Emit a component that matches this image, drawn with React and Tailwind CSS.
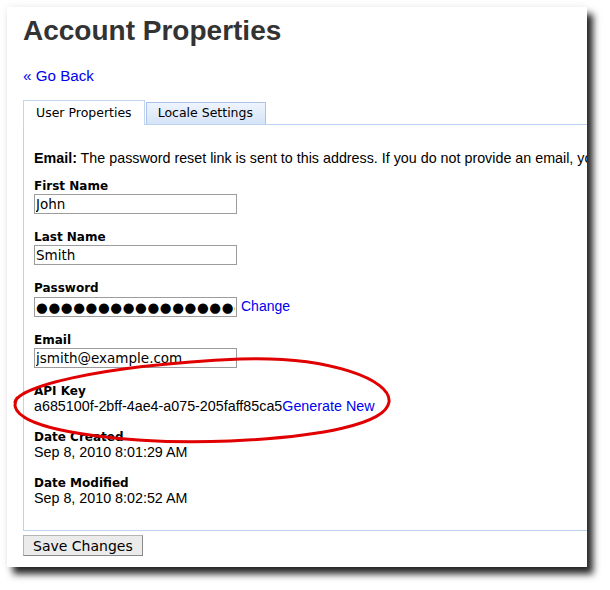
import React from "react";

const labelCls =
  "font-['DejaVu_Sans',sans-serif] font-bold text-[12px] leading-[16px] text-black";
const inputCls =
  "block w-[203px] h-[20px] border border-[#9c9c9c] bg-white px-[1px] font-['DejaVu_Sans',sans-serif] text-[13.5px] leading-[18px] text-black outline-none";
const valueCls =
  "font-['Liberation_Sans',Arial,sans-serif] text-[14.3px] leading-[15px] text-black";

function Field({ label, children }) {
  return (
    <div className="mb-[15px]">
      <div className={labelCls}>{label}</div>
      {children}
    </div>
  );
}

export default function App() {
  return (
    <div className="relative w-[610px] h-[590px] bg-white pl-[7px] pt-[7px]">
      {/* the page, shot with its drop shadow */}
      <div className="w-[580px] h-[560px] overflow-hidden bg-white pl-[16px] pt-[8px] shadow-[0_0_8px_rgba(0,0,0,0.07),6px_7px_7px_rgba(0,0,0,0.85)]">
        <h1 className="font-['Liberation_Sans',Arial,sans-serif] font-bold text-[28px] leading-[32px] text-[#333]">
          Account Properties
        </h1>

        <a
          href="#"
          className="mt-[21px] block font-['Liberation_Sans',Arial,sans-serif] text-[15.2px] leading-[16px] text-[#0000ee]"
        >
          « Go Back
        </a>

        <div className="mt-[16px] flex items-end w-[700px]">
          <div className="relative z-10 -mb-px h-[25px] flex items-center px-[12px] border border-b-0 border-[#c2d5ef] bg-white font-['DejaVu_Sans',sans-serif] text-[12.5px] text-black">
            User Properties
          </div>
          <div className="ml-[1px] h-[22px] flex items-center pl-[11px] pr-[12px] border border-b-0 border-[#a9c3ea] bg-gradient-to-b from-[#eef4fd] to-[#d6e4f8] font-['DejaVu_Sans',sans-serif] text-[12.5px] text-black">
            Locale Settings
          </div>
        </div>

        <div className="w-[700px] border border-[#bcd2f0] pl-[10px] pt-[25px] pb-[9px]">
          <p className="mb-[12px] whitespace-nowrap font-['Liberation_Sans',Arial,sans-serif] text-[14.3px] leading-[16px] text-black">
            <b>Email:</b> The password reset link is sent to this address. If you do not provide an email, you will not be able to reset your password.
          </p>

          <Field label="First Name">
            <input className={inputCls} defaultValue="John" readOnly />
          </Field>
          <Field label="Last Name">
            <input className={inputCls} defaultValue="Smith" readOnly />
          </Field>
          <Field label="Password">
            <div className="flex items-center">
              <input
                className={`${inputCls} tracking-[0.6px]`}
                defaultValue="●●●●●●●●●●●●●●●●●●●●"
                readOnly
              />
              <a
                href="#"
                className="ml-[4px] font-['Liberation_Sans',Arial,sans-serif] text-[14px] text-[#0000ee]"
              >
                Change
              </a>
            </div>
          </Field>
          <Field label="Email">
            <input className={inputCls} defaultValue="jsmith@example.com" readOnly />
          </Field>
          <Field label="API Key">
            <div className={valueCls}>
              a685100f-2bff-4ae4-a075-205faff85ca5
              <a href="#" className="text-[#0000ee]">
                Generate New
              </a>
            </div>
          </Field>
          <Field label="Date Created">
            <div className={valueCls}>Sep 8, 2010 8:01:29 AM</div>
          </Field>
          <Field label="Date Modified">
            <div className={valueCls}>Sep 8, 2010 8:02:52 AM</div>
          </Field>
        </div>

        <button className="mt-[4px] h-[21px] px-[9px] border border-[#b4b4b4] border-r-[#8a8a8a] border-b-[#8a8a8a] bg-[#ebebeb] font-['DejaVu_Sans',sans-serif] text-[14px] leading-[18px] text-black">
          Save Changes
        </button>
      </div>

      {/* hand drawn red ring round the API key */}
      <svg
        className="absolute left-0 top-0 pointer-events-none"
        width="610"
        height="590"
        viewBox="0 0 610 590"
      >
        <path
          d="M 15 402 C 18 388 90 366 240 359 C 330 356 392 380 389 402 C 386 424 320 437 230 441 C 130 445 40 432 20 414 C 14 408 14 404 17 398"
          fill="none"
          stroke="#e00000"
          strokeWidth="3"
          strokeLinecap="round"
        />
      </svg>
    </div>
  );
}
